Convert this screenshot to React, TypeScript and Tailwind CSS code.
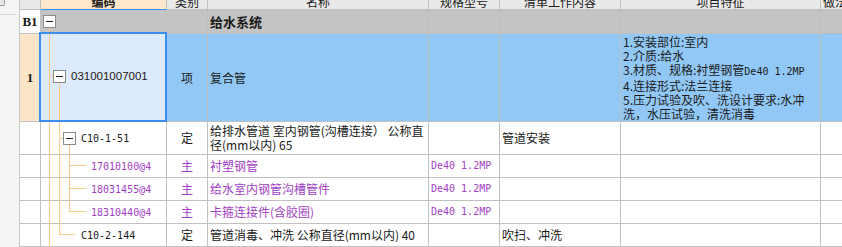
import React from 'react';

const CJK = { fontFamily: "'Noto Sans CJK SC', sans-serif" };
const MONO = { fontFamily: "'DejaVu Sans Mono', 'Noto Sans CJK SC', monospace" };
const SERIF = { fontFamily: "'Liberation Serif', serif" };

const base = 'shrink-0 border-r border-b border-[#c0c0c0] flex items-center';
const W = {
  hdr: 'w-[21px]',
  code: 'w-[126px]',
  type: 'w-[41px]',
  name: 'w-[221px]',
  spec: 'w-[71px]',
  work: 'w-[121px]',
  feat: 'w-[200px]',
};

const Line = ({ className }: { className: string }) => (
  <div className={`absolute bg-[#fcc98a] ${className}`} />
);

const Toggle = () => (
  <div className="relative w-[13px] h-[13px] shrink-0 border border-[#8a8a8a] bg-white flex items-center justify-center">
    <div className="w-[7px] h-[1px] bg-[#222]" />
  </div>
);

const purple = 'text-[#a13fc3]';

interface ChildRow {
  code: string;
  name: string;
  last?: boolean;
}

const children: ChildRow[] = [
  { code: '17010100@4', name: '衬塑钢管' },
  { code: '18031455@4', name: '给水室内钢管沟槽管件' },
  { code: '18310440@4', name: '卡箍连接件(含胶圈)', last: true },
];

export default function App() {
  return (
    <div className="w-[842px] h-[247px] overflow-hidden bg-white flex text-[12px] text-[#1a1a1a]" style={CJK}>
      {/* left strip */}
      <div className="relative w-[20px] shrink-0 bg-[#f4f4f4] border-r border-[#c8c8c8]">
        <div className="w-[5px] h-[6px] border-r border-b border-[#9a9a9a] rounded-br-[2px] bg-[#e8e8e8]" />
        <div className="mt-[8px] w-[16px] h-[1px] bg-[#d8d8d8]" />
      </div>

      <div className="flex flex-col flex-1">
        {/* header */}
        <div className="flex h-[10px] overflow-hidden bg-[#e9e9e9]">
          <div className={`${base} ${W.hdr}`} />
          <div className={`${base} ${W.code} justify-center bg-[#ffe8cb] border-b-[#3d8ef0]`}>
            <span className="-mt-[6px] leading-[12px] font-bold">编码</span>
          </div>
          <div className={`${base} ${W.type} justify-center`}>
            <span className="-mt-[6px] leading-[12px]">类别</span>
          </div>
          <div className={`${base} ${W.name} justify-center`}>
            <span className="-mt-[6px] leading-[12px]">名称</span>
          </div>
          <div className={`${base} ${W.spec} justify-center`}>
            <span className="-mt-[6px] leading-[12px]">规格型号</span>
          </div>
          <div className={`${base} ${W.work} justify-center`}>
            <span className="-mt-[6px] leading-[12px]">清单工作内容</span>
          </div>
          <div className={`${base} ${W.feat} justify-center`}>
            <span className="-mt-[6px] leading-[12px]">项目特征</span>
          </div>
          <div className="flex-1 border-b border-[#c0c0c0] pl-[2px] flex items-center">
            <span className="-mt-[6px] leading-[12px] whitespace-nowrap">做法说明</span>
          </div>
        </div>

        {/* B1 row */}
        <div className="flex h-[24px] bg-[#c4c4c4]">
          <div className={`${base} ${W.hdr} justify-center bg-white text-[13px] font-bold`} style={SERIF}>
            B1
          </div>
          <div className={`${base} ${W.code} relative pl-[2px] border-[#b8b8b8]`}>
            <Line className="left-[8px] top-[17px] -bottom-[1px] w-[1px]" />
            <Toggle />
          </div>
          <div className={`${base} ${W.type} border-[#b8b8b8]`} />
          <div className={`${base} ${W.name} pl-[2px] text-[13px] font-bold border-[#b8b8b8]`}>给水系统</div>
          <div className={`${base} ${W.spec} border-[#b8b8b8]`} />
          <div className={`${base} ${W.work} border-[#b8b8b8]`} />
          <div className={`${base} ${W.feat} border-[#b8b8b8]`} />
          <div className="flex-1 border-b border-[#b8b8b8]" />
        </div>

        {/* item row */}
        <div className="flex h-[88px] bg-[#92c8f6]">
          <div className={`${base} ${W.hdr} justify-center bg-[#fde6c8] text-[13px] font-bold`} style={SERIF}>
            1
          </div>
          <div className={`${base} ${W.code} relative pl-[12px] pb-[2px] bg-[#dde9fd]`}>
            <Line className="left-[8px] top-0 -bottom-[1px] w-[1px]" />
            <Line className="left-[8px] top-[42px] w-[4px] h-[1px]" />
            <Line className="left-[18px] top-[49px] -bottom-[1px] w-[1px]" />
            <Toggle />
            <span className="ml-[5px] text-[11.5px]" style={{ fontFamily: "'Liberation Sans', sans-serif" }}>
              031001007001
            </span>
            <div className="absolute -left-[2px] -top-[2px] -right-[1px] -bottom-[1px] border-2 border-[#3d8ef0] z-10" />
          </div>
          <div className={`${base} ${W.type} justify-center`}>项</div>
          <div className={`${base} ${W.name} pl-[2px]`}>复合管</div>
          <div className={`${base} ${W.spec}`} />
          <div className={`${base} ${W.work}`} />
          <div className={`${base} ${W.feat} items-start pl-[2px] pt-[1px]`}>
            <div className="leading-[14px] whitespace-nowrap">
              <div>1.安装部位:室内</div>
              <div>2.介质:给水</div>
              <div>
                3.材质、规格:衬塑钢管<span style={MONO} className="text-[10px]">De40 1.2MP</span>
              </div>
              <div>4.连接形式:法兰连接</div>
              <div>5.压力试验及吹、洗设计要求:水冲</div>
              <div>洗，水压试验，清洗消毒</div>
            </div>
          </div>
          <div className="flex-1 border-b border-[#c0c0c0]" />
        </div>

        {/* quota row */}
        <div className="flex h-[33px]">
          <div className={`${base} ${W.hdr}`} />
          <div className={`${base} ${W.code} relative pl-[22px]`}>
            <Line className="left-[8px] top-0 -bottom-[1px] w-[1px]" />
            <Line className="left-[18px] top-0 -bottom-[1px] w-[1px]" />
            <Line className="left-[18px] top-[16px] w-[4px] h-[1px]" />
            <Line className="left-[28px] top-[22px] -bottom-[1px] w-[1px]" />
            <Toggle />
            <span className="ml-[5px] text-[10px]" style={MONO}>C10-1-51</span>
          </div>
          <div className={`${base} ${W.type} justify-center`}>定</div>
          <div className={`${base} ${W.name} pl-[2px] leading-[14px] whitespace-nowrap`}>
            <div>
              给排水管道 室内钢管(沟槽连接） 公称直
              <br />
              径(mm以内) 65
            </div>
          </div>
          <div className={`${base} ${W.spec}`} />
          <div className={`${base} ${W.work} pl-[2px]`}>管道安装</div>
          <div className={`${base} ${W.feat}`} />
          <div className="flex-1 border-b border-[#c0c0c0]" />
        </div>

        {/* material rows */}
        {children.map((c) => (
          <div key={c.code} className="flex h-[23px]">
            <div className={`${base} ${W.hdr}`} />
            <div className={`${base} ${W.code} relative pl-[50px]`}>
              <Line className="left-[8px] top-0 -bottom-[1px] w-[1px]" />
              <Line className="left-[18px] top-0 -bottom-[1px] w-[1px]" />
              {c.last ? (
                <Line className="left-[28px] top-0 h-[11px] w-[1px]" />
              ) : (
                <Line className="left-[28px] top-0 -bottom-[1px] w-[1px]" />
              )}
              <Line className="left-[28px] top-[10px] w-[17px] h-[1px]" />
              <span className={`text-[10px] ${purple}`} style={MONO}>{c.code}</span>
            </div>
            <div className={`${base} ${W.type} justify-center ${purple}`}>主</div>
            <div className={`${base} ${W.name} pl-[2px] ${purple}`}>{c.name}</div>
            <div className={`${base} ${W.spec} pl-[2px] pb-[2px] text-[10px] ${purple}`} style={MONO}>
              De40 1.2MP
            </div>
            <div className={`${base} ${W.work}`} />
            <div className={`${base} ${W.feat}`} />
            <div className="flex-1 border-b border-[#c0c0c0]" />
          </div>
        ))}

        {/* flush row */}
        <div className="flex h-[23px]">
          <div className={`${base} ${W.hdr}`} />
          <div className={`${base} ${W.code} relative pl-[40px]`}>
            <Line className="left-[8px] top-0 -bottom-[1px] w-[1px]" />
            <Line className="left-[18px] top-0 h-[11px] w-[1px]" />
            <Line className="left-[18px] top-[10px] w-[16px] h-[1px]" />
            <span className="text-[10px]" style={MONO}>C10-2-144</span>
          </div>
          <div className={`${base} ${W.type} justify-center`}>定</div>
          <div className={`${base} ${W.name} pl-[2px] whitespace-nowrap`}>管道消毒、冲洗 公称直径(mm以内) 40</div>
          <div className={`${base} ${W.spec}`} />
          <div className={`${base} ${W.work} pl-[2px]`}>吹扫、冲洗</div>
          <div className={`${base} ${W.feat}`} />
          <div className="flex-1 border-b border-[#c0c0c0]" />
        </div>
      </div>
    </div>
  );
}
